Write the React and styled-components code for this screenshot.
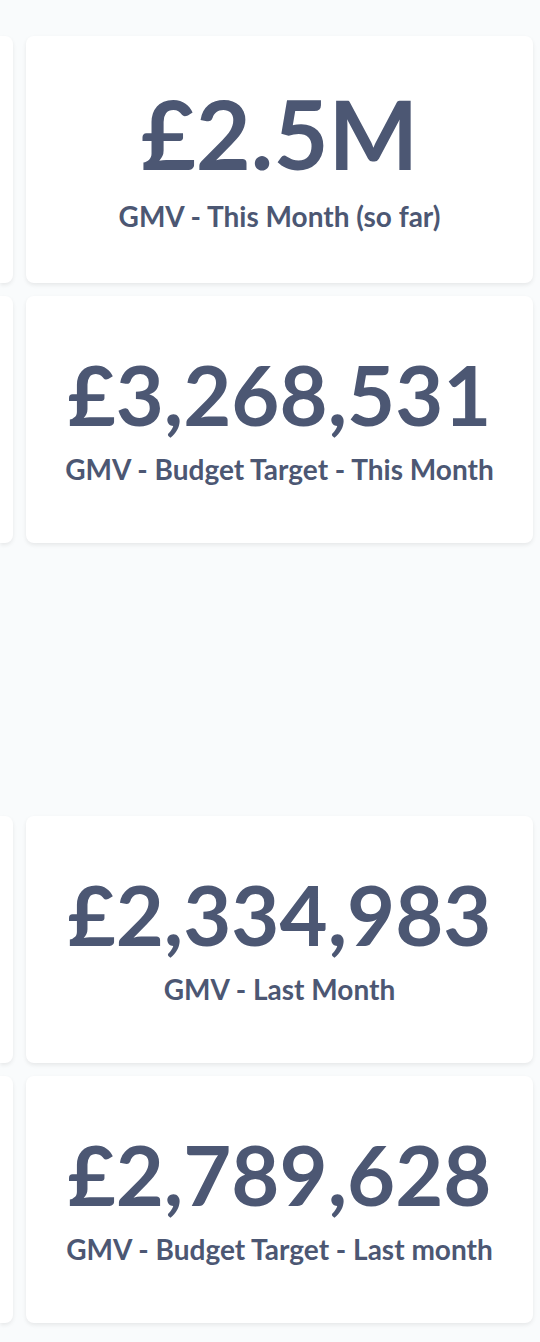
import React from "react";
import styled, { createGlobalStyle } from "styled-components";

const GlobalStyle = createGlobalStyle`
    html, body {
        margin: 0;
        padding: 0;
        background-color: #f9fbfc;
        font-family: Lato, "Noto Sans", sans-serif;
        color: #4c5773;
    }
`;

const Dashboard = styled.div`
    display: grid;
    grid-template-columns: 13px 507px;
    grid-auto-rows: 247px;
    column-gap: 13px;
    row-gap: 13px;
    padding: 36px 7px 19px 0;
`;

const Card = styled.div`
    background-color: #fff;
    border-radius: ${(p) => (p.$clipped ? "0 8px 8px 0" : "8px")};
    box-shadow: 0 2px 4px rgba(0, 0, 0, 0.08);
    display: flex;
    flex-direction: column;
    align-items: center;
    justify-content: center;
    overflow: hidden;
`;

const Empty = styled.div``;

const Value = styled.div`
    font-size: ${(p) => p.$size}px;
    font-weight: 700;
    line-height: 1;
    white-space: nowrap;
`;

const Label = styled.div`
    font-size: 28px;
    font-weight: 700;
    line-height: 1.2;
    margin-top: ${(p) => p.$gap}px;
    white-space: nowrap;
`;

const scalars = [
    { value: "£2.5M", label: "GMV - This Month (so far)", size: 95, gap: 19 },
    { value: "£3,268,531", label: "GMV - Budget Target - This Month", size: 83, gap: 17 },
    null,
    { value: "£2,334,983", label: "GMV - Last Month", size: 83, gap: 17 },
    { value: "£2,789,628", label: "GMV - Budget Target - Last month", size: 83, gap: 17 },
];

const App = () => (
    <>
        <GlobalStyle />
        <Dashboard>
            {scalars.map((s, i) =>
                s ? (
                    <React.Fragment key={i}>
                        <Card $clipped />
                        <Card>
                            <Value $size={s.size}>{s.value}</Value>
                            <Label $gap={s.gap}>{s.label}</Label>
                        </Card>
                    </React.Fragment>
                ) : (
                    <React.Fragment key={i}>
                        <Empty />
                        <Empty />
                    </React.Fragment>
                )
            )}
        </Dashboard>
    </>
);

export default App;
